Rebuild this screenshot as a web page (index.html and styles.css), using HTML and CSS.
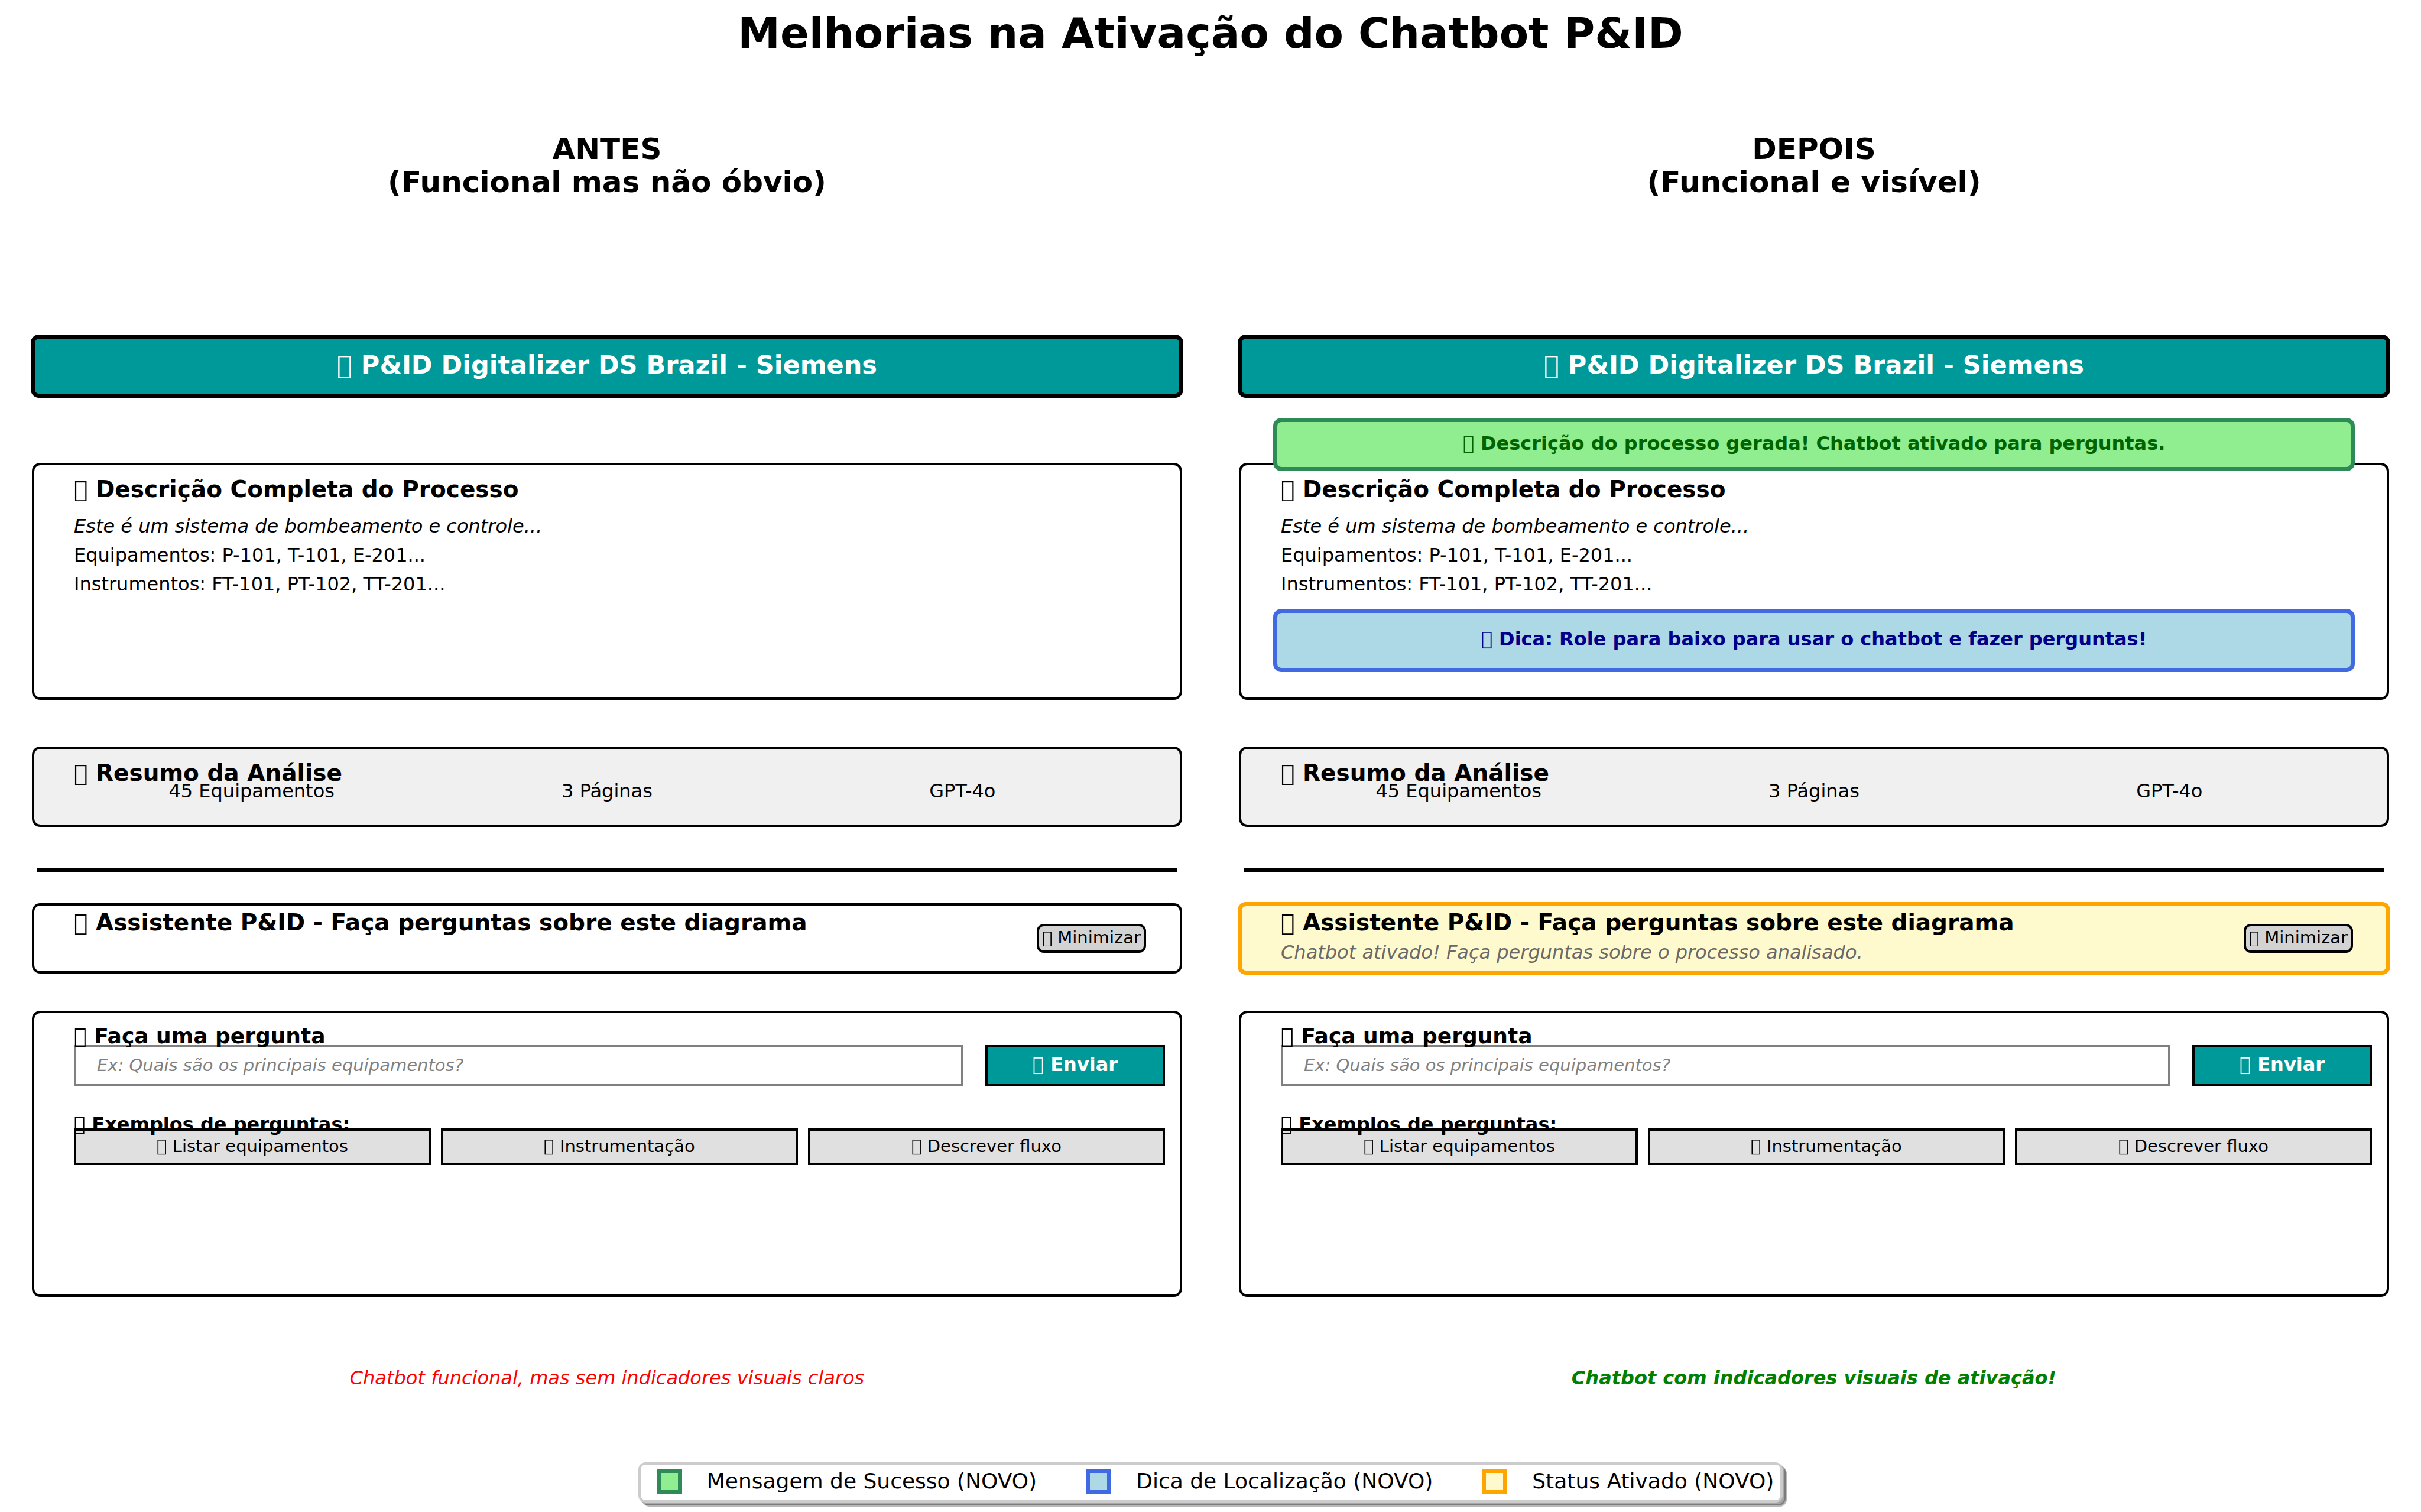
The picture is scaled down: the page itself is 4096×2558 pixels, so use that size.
FILE: index.html
```html
<!DOCTYPE html>
<html lang="pt-BR">
<head>
<meta charset="utf-8">
<title>Melhorias na Ativação do Chatbot P&amp;ID</title>
<link rel="stylesheet" href="styles.css">
</head>
<body>
<svg width="0" height="0" class="sprite" aria-hidden="true">
  <symbol id="box" viewBox="0 0 600 882">
    <rect x="78" y="28" width="444" height="826" fill="none" stroke="currentColor" stroke-width="56"/>
  </symbol>
</svg>

<h1 class="page-title">Melhorias na Ativação do Chatbot P&amp;ID</h1>

<main class="columns">
  <section class="column">
    <h2 class="column-title">ANTES<br>(Funcional mas não óbvio)</h2>
    <header class="app-bar"><svg class="icon" aria-hidden="true"><use href="#box"/></svg> P&amp;ID Digitalizer DS Brazil - Siemens</header>

    <article class="card description">
      <h3 class="card-title"><svg class="icon" aria-hidden="true"><use href="#box"/></svg> Descrição Completa do Processo</h3>
      <p class="text lead">Este é um sistema de bombeamento e controle...</p>
      <p class="text">Equipamentos: P-101, T-101, E-201...</p>
      <p class="text">Instrumentos: FT-101, PT-102, TT-201...</p>
    </article>

    <article class="card summary">
      <h3 class="card-title"><svg class="icon" aria-hidden="true"><use href="#box"/></svg> Resumo da Análise</h3>
      <ul class="metrics">
        <li>45 Equipamentos</li>
        <li>3 Páginas</li>
        <li>GPT-4o</li>
      </ul>
    </article>

    <hr class="divider">

    <article class="card assistant">
      <div class="assistant-text">
        <h3 class="card-title"><svg class="icon" aria-hidden="true"><use href="#box"/></svg> Assistente P&amp;ID - Faça perguntas sobre este diagrama</h3>
      </div>
      <button class="minimize" type="button"><svg class="icon" aria-hidden="true"><use href="#box"/></svg> Minimizar</button>
    </article>

    <form class="card chat">
      <label class="question-label" for="question-before"><svg class="icon" aria-hidden="true"><use href="#box"/></svg> Faça uma pergunta</label>
      <div class="question-row">
        <input class="question" id="question-before" type="text" placeholder="Ex: Quais são os principais equipamentos?">
        <button class="send" type="button"><svg class="icon" aria-hidden="true"><use href="#box"/></svg> Enviar</button>
      </div>
      <h4 class="examples-title"><svg class="icon" aria-hidden="true"><use href="#box"/></svg> Exemplos de perguntas:</h4>
      <div class="examples">
        <button class="example" type="button"><svg class="icon" aria-hidden="true"><use href="#box"/></svg> Listar equipamentos</button>
        <button class="example" type="button"><svg class="icon" aria-hidden="true"><use href="#box"/></svg> Instrumentação</button>
        <button class="example" type="button"><svg class="icon" aria-hidden="true"><use href="#box"/></svg> Descrever fluxo</button>
      </div>
    </form>

    <p class="caption caption-before">Chatbot funcional, mas sem indicadores visuais claros</p>
  </section>

  <section class="column">
    <h2 class="column-title">DEPOIS<br>(Funcional e visível)</h2>
    <header class="app-bar"><svg class="icon" aria-hidden="true"><use href="#box"/></svg> P&amp;ID Digitalizer DS Brazil - Siemens</header>

    <p class="alert success"><svg class="icon" aria-hidden="true"><use href="#box"/></svg> Descrição do processo gerada! Chatbot ativado para perguntas.</p>

    <article class="card description">
      <h3 class="card-title"><svg class="icon" aria-hidden="true"><use href="#box"/></svg> Descrição Completa do Processo</h3>
      <p class="text lead">Este é um sistema de bombeamento e controle...</p>
      <p class="text">Equipamentos: P-101, T-101, E-201...</p>
      <p class="text">Instrumentos: FT-101, PT-102, TT-201...</p>
      <p class="alert tip"><svg class="icon" aria-hidden="true"><use href="#box"/></svg> Dica: Role para baixo para usar o chatbot e fazer perguntas!</p>
    </article>

    <article class="card summary">
      <h3 class="card-title"><svg class="icon" aria-hidden="true"><use href="#box"/></svg> Resumo da Análise</h3>
      <ul class="metrics">
        <li>45 Equipamentos</li>
        <li>3 Páginas</li>
        <li>GPT-4o</li>
      </ul>
    </article>

    <hr class="divider">

    <article class="card assistant active">
      <div class="assistant-text">
        <h3 class="card-title"><svg class="icon" aria-hidden="true"><use href="#box"/></svg> Assistente P&amp;ID - Faça perguntas sobre este diagrama</h3>
        <p class="text status">Chatbot ativado! Faça perguntas sobre o processo analisado.</p>
      </div>
      <button class="minimize" type="button"><svg class="icon" aria-hidden="true"><use href="#box"/></svg> Minimizar</button>
    </article>

    <form class="card chat">
      <label class="question-label" for="question-after"><svg class="icon" aria-hidden="true"><use href="#box"/></svg> Faça uma pergunta</label>
      <div class="question-row">
        <input class="question" id="question-after" type="text" placeholder="Ex: Quais são os principais equipamentos?">
        <button class="send" type="button"><svg class="icon" aria-hidden="true"><use href="#box"/></svg> Enviar</button>
      </div>
      <h4 class="examples-title"><svg class="icon" aria-hidden="true"><use href="#box"/></svg> Exemplos de perguntas:</h4>
      <div class="examples">
        <button class="example" type="button"><svg class="icon" aria-hidden="true"><use href="#box"/></svg> Listar equipamentos</button>
        <button class="example" type="button"><svg class="icon" aria-hidden="true"><use href="#box"/></svg> Instrumentação</button>
        <button class="example" type="button"><svg class="icon" aria-hidden="true"><use href="#box"/></svg> Descrever fluxo</button>
      </div>
    </form>

    <p class="caption caption-after">Chatbot com indicadores visuais de ativação!</p>
  </section>
</main>

<ul class="legend">
  <li class="legend-item"><span class="swatch swatch-success"></span>Mensagem de Sucesso (NOVO)</li>
  <li class="legend-item"><span class="swatch swatch-tip"></span>Dica de Localização (NOVO)</li>
  <li class="legend-item"><span class="swatch swatch-active"></span>Status Ativado (NOVO)</li>
</ul>
</body>
</html>
```
FILE: styles.css
```css
* {
  box-sizing: border-box;
  margin: 0;
  padding: 0;
}

body {
  padding: 14px 54px 16px;
  background: #fff;
  color: #000;
  font-family: "DejaVu Sans", sans-serif;
  font-size: 32px;
}

button,
input {
  font-family: inherit;
  color: inherit;
  border-radius: 0;
}

ul {
  list-style: none;
}

.sprite {
  display: block;
}

/* Box icon, sized with the text it leads */
.icon {
  width: 0.6em;
  height: 0.882em;
  vertical-align: -0.177em;
}

.page-title {
  font-size: 72px;
  line-height: 84px;
  text-align: center;
}

/* Before / after columns */
.columns {
  display: flex;
  gap: 96px;
  margin-top: 126px;
}

.column {
  flex: 1;
  min-width: 0;
  display: flex;
  flex-direction: column;
}

.column-title {
  font-size: 50px;
  line-height: 56px;
  text-align: center;
}

.app-bar {
  margin: 230px -2px 0;
  padding: 21px 0 25px;
  border: 7px solid #000;
  border-radius: 14px;
  background: #099;
  color: #fff;
  font-size: 43px;
  font-weight: bold;
  line-height: 47px;
  text-align: center;
}

.card {
  border: 4px solid #000;
  border-radius: 14px;
  background: #fff;
  padding: 17px 54px 15px 67px;
}

.card-title {
  font-size: 39px;
  line-height: 48px;
}

.text {
  line-height: 49px;
}

/* Alerts */
.alert {
  border: 7px solid;
  border-radius: 14px;
  font-weight: bold;
  text-align: center;
}

.success {
  position: relative;
  z-index: 1;
  margin: 34px 58px 0;
  padding: 16px 0 20px;
  line-height: 40px;
  border-color: #2e8b57;
  background: #90ee90;
  color: #006400;
}

.tip {
  margin: 17px 0 0 -13px;
  padding: 24px 0 29px;
  line-height: 40px;
  border-color: #4169e1;
  background: #add8e6;
  color: #00008b;
}

/* Process description */
.description {
  min-height: 401px;
  margin-top: 110px;
}

.success + .description {
  margin-top: -14px;
}

.lead {
  margin-top: 14px;
  font-style: italic;
}

/* Analysis summary */
.summary {
  min-height: 136px;
  margin-top: 79px;
  padding-right: 67px;
  background: #f0f0f0;
}

.metrics {
  display: grid;
  grid-template-columns: repeat(3, 1fr);
  margin-top: -18px;
  line-height: 49px;
  text-align: center;
}

.divider {
  height: 7px;
  margin: 69px 8px 53px;
  border: 0;
  background: #000;
}

/* Assistant header */
.assistant {
  display: flex;
  align-items: center;
  justify-content: space-between;
  min-height: 119px;
  padding: 5px 57px 5px 67px;
}

.assistant-text {
  align-self: flex-start;
}

.active {
  margin: -2px -2px;
  min-height: 123px;
  padding: 4px 56px 4px 66px;
  border: 7px solid #ffa500;
  background: #fffacd;
}

.status {
  margin-top: 2px;
  color: #696969;
  font-style: italic;
}

.minimize {
  padding: 0 5px 2px;
  border: 4px solid #000;
  border-radius: 12px;
  background: #d3d3d3;
  font-size: 29px;
  line-height: 39px;
}

/* Chat form */
.chat {
  margin-top: 63px;
  padding: 17px 25px 219px 67px;
}

.question-label,
.examples-title {
  position: relative;
  z-index: 1;
  display: block;
  font-weight: bold;
}

.question-label {
  font-size: 36px;
  line-height: 44px;
}

.question-row {
  display: flex;
  gap: 37px;
  margin-top: -7px;
}

.question {
  flex: 1;
  height: 70px;
  padding: 0 35px 3px;
  border: 4px solid #808080;
  background: #fff;
  font-size: 29px;
}

.question::placeholder {
  color: #808080;
  font-style: italic;
  opacity: 1;
}

.send {
  width: 304px;
  padding-bottom: 4px;
  border: 4px solid #000;
  background: #099;
  color: #fff;
  font-size: 32px;
  font-weight: bold;
}

.examples-title {
  margin-top: 44px;
  font-size: 32px;
  line-height: 40px;
}

.examples {
  display: grid;
  grid-template-columns: repeat(3, 1fr);
  gap: 17px;
  margin-top: -13px;
}

.example {
  height: 62px;
  padding-bottom: 3px;
  border: 4px solid #000;
  background: #e0e0e0;
  font-size: 29px;
}

.caption {
  margin-top: 117px;
  font-style: italic;
  line-height: 40px;
  text-align: center;
}

.caption-before {
  color: #f00;
}

.caption-after {
  color: #008000;
  font-weight: bold;
}

/* Legend */
.legend {
  display: flex;
  gap: 83px;
  width: fit-content;
  margin: 123px auto 0;
  padding: 6px 11px 10px 27px;
  border: 4px solid #ccc;
  border-radius: 12px;
  background: #fff;
  box-shadow: 3px 3px #a6a6a6, 5px 5px #7c7c7c, 7px 7px #b8b8b8;
  font-size: 36px;
  line-height: 44px;
}

.legend-item {
  display: flex;
  align-items: center;
  gap: 42px;
}

.swatch {
  width: 43px;
  height: 43px;
  border: 7px solid;
}

.swatch-success {
  border-color: #2e8b57;
  background: #90ee90;
}

.swatch-tip {
  border-color: #4169e1;
  background: #add8e6;
}

.swatch-active {
  border-color: #ffa500;
  background: #fffacd;
}
```
